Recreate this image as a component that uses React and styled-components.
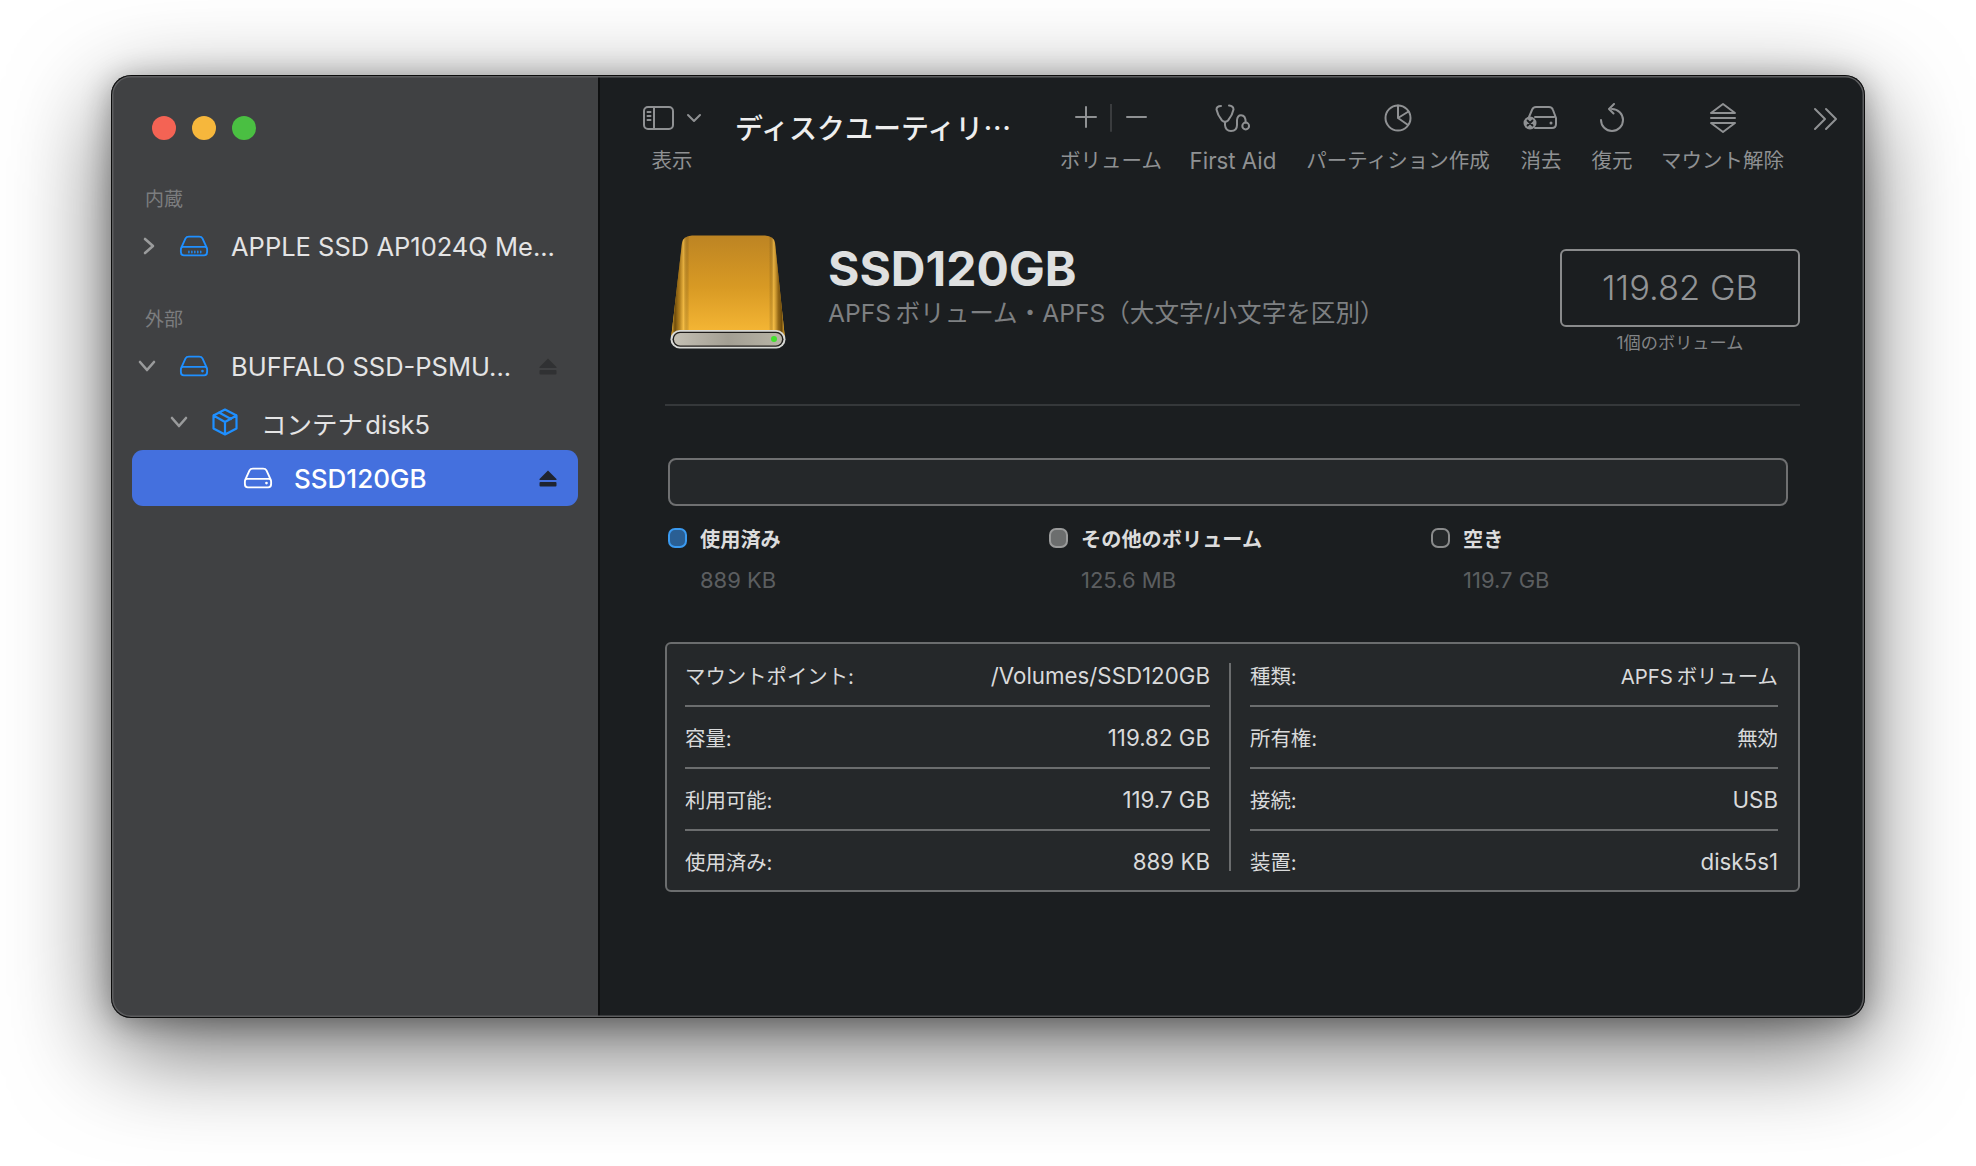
import styled, { createGlobalStyle } from "styled-components";

const GlobalStyle = createGlobalStyle`
  html, body {
    margin: 0;
    background: #fff;
  }
  body {
    font-family: Inter, "Noto Sans CJK JP", "Noto Sans", sans-serif;
    overflow: hidden;
  }
`;

const Page = styled.div`
  width: 1976px;
  height: 1166px;
  box-sizing: border-box;
  padding: 75px 0 0 111px;
  overflow: hidden;
`;

const Win = styled.div`
  display: flex;
  width: 1754px;
  height: 943px;
  border-radius: 20px;
  overflow: hidden;
  background: #1b1e20;
  box-shadow: 0 30px 100px rgba(0, 0, 0, 0.6), 0 4px 30px rgba(0, 0, 0, 0.32);
  position: relative;
  &::after {
    content: "";
    position: absolute;
    inset: 0;
    border-radius: 20px;
    box-shadow: inset 0 0 0 1px #0c0c0c, inset 0 0 0 2.5px #5c5d5f;
    pointer-events: none;
  }
`;

/* sidebar */
const Sidebar = styled.aside`
  width: 489px;
  flex: none;
  box-sizing: border-box;
  background: #404143;
  border-right: 2px solid #0e0f10;
  padding: 41px 20px 0 21px;
`;

const Lights = styled.div`
  display: flex;
  gap: 16px;
  padding-left: 20px;
  margin-bottom: 48px;
`;

const Light = styled.span`
  width: 24px;
  height: 24px;
  border-radius: 50%;
  background: ${(p) => p.$color};
`;

const SectionLabel = styled.div`
  font-size: 19px;
  line-height: 24px;
  color: #7c7d7f;
  padding-left: 13px;
  margin: ${(p) => p.$margin || "0"};
`;

const Row = styled.div`
  display: flex;
  align-items: center;
  height: 56px;
  margin: ${(p) => p.$margin || "0"};
  border-radius: 11px;
  background: ${(p) => (p.$selected ? "#4470de" : "transparent")};
  color: ${(p) => (p.$selected ? "#fff" : "#e4e4e5")};
  font-size: ${(p) => (p.$selected ? 26 : 25.5)}px;
  font-weight: ${(p) => (p.$selected ? 500 : 400)};
  white-space: nowrap;
`;

const ChevronSlot = styled.span`
  display: flex;
  justify-content: center;
  flex: none;
  width: 24px;
  margin-left: ${(p) => p.$left}px;
  margin-right: ${(p) => p.$right}px;
`;

const RowIcon = styled.svg`
  display: block;
  flex: none;
  width: ${(p) => p.$w}px;
  height: ${(p) => p.$h}px;
  margin-right: ${(p) => p.$gap}px;
  fill: none;
  stroke: ${(p) => p.$color};
  stroke-width: 2.2;
  stroke-linecap: round;
  stroke-linejoin: round;
`;

const RowLabel = styled.span`
  flex: 1;
`;

const Eject = styled.svg`
  display: block;
  flex: none;
  width: 18px;
  height: 17px;
  margin-right: 21px;
  fill: ${(p) => p.$color};
`;

/* main area */
const Main = styled.main`
  flex: 1;
  min-width: 0;
`;

const Toolbar = styled.header`
  display: flex;
  align-items: flex-start;
  height: 128px;
  padding-top: 27px;
  box-sizing: border-box;
`;

const ToolItem = styled.div`
  display: flex;
  flex-direction: column;
  align-items: center;
  flex: none;
  width: ${(p) => p.$w}px;
  margin-left: ${(p) => p.$left}px;
  color: #8f9193;
`;

const ToolIcon = styled.div`
  display: flex;
  align-items: center;
  justify-content: center;
  height: 32px;
  margin-bottom: 13.5px;
  svg {
    display: block;
    fill: none;
    stroke: #8f9193;
    stroke-width: 2;
    stroke-linecap: round;
    stroke-linejoin: round;
  }
`;

const ToolLabel = styled.span`
  font-size: ${(p) => p.$size || 20.5}px;
  line-height: 26px;
  white-space: nowrap;
`;

const AppTitle = styled.h1`
  flex: none;
  width: 275px;
  margin: 7px 0 0 32px;
  font-family: "Noto Sans CJK JP", sans-serif;
  font-size: 28px;
  font-weight: 500;
  line-height: 36px;
  color: #eeeeee;
  white-space: nowrap;
`;

const Overflow = styled.svg`
  display: block;
  flex: none;
  width: 26px;
  height: 24px;
  margin: 5px 0 0 30px;
  fill: none;
  stroke: #8f9193;
  stroke-width: 2;
  stroke-linecap: round;
  stroke-linejoin: round;
`;

const Content = styled.div`
  padding: 0 65px 0 65px;
`;

const Header = styled.section`
  display: flex;
  align-items: flex-start;
  border-bottom: 2px solid #35383a;
  box-sizing: border-box;
  height: 203px;
`;

const DiskArt = styled.svg`
  display: block;
  flex: none;
  width: 116px;
  height: 114px;
  margin: 32px 42px 0 5px;
`;

const HeaderText = styled.div`
  flex: 1;
  padding-top: 38px;
`;

const DiskName = styled.div`
  font-size: 48px;
  font-weight: 700;
  line-height: 56px;
  color: #dfe0e0;
`;

const DiskMeta = styled.div`
  font-size: 24.6px;
  line-height: 34px;
  margin-top: -1px;
  color: #7e8082;
  white-space: nowrap;
`;

const SizeCol = styled.div`
  width: 240px;
  padding-top: 46px;
  text-align: center;
`;

const SizeBox = styled.div`
  box-sizing: border-box;
  height: 78px;
  border: 2px solid #8a8b8c;
  border-radius: 6px;
  line-height: 74px;
  font-size: 34.5px;
  font-weight: 300;
  color: #929496;
`;

const SizeNote = styled.div`
  margin-top: 4px;
  font-size: 17.2px;
  line-height: 24px;
  color: #838587;
`;

const UsageBar = styled.div`
  box-sizing: border-box;
  height: 48px;
  margin: 52px 12px 0 3px;
  border: 2px solid #6f7071;
  border-radius: 8px;
  background: #25282a;
`;

const Legend = styled.div`
  display: grid;
  grid-template-columns: 381px 382px 1fr;
  margin: 21px 0 0 3px;
  height: 115px;
`;

const LegendItem = styled.div`
  display: grid;
  grid-template-columns: 19px 1fr;
  column-gap: 13px;
  grid-auto-rows: min-content;
`;

const Swatch = styled.span`
  box-sizing: border-box;
  width: 19px;
  height: 20px;
  border-radius: 7px;
  border: 2px solid ${(p) => p.$border};
  background: ${(p) => p.$fill};
  margin-top: 1px;
`;

const LegendName = styled.span`
  font-size: 20.2px;
  font-weight: 700;
  line-height: 26px;
  color: #dcdcdc;
  white-space: nowrap;
`;

const LegendValue = styled.span`
  grid-column: 2;
  margin-top: 14px;
  font-size: 22px;
  line-height: 26px;
  color: #5c5e60;
`;

const InfoCard = styled.section`
  box-sizing: border-box;
  display: grid;
  grid-template-columns: 564px 1fr;
  height: 250px;
  padding: 19px 0 0;
  border: 2px solid #6b6d6e;
  border-radius: 6px;
  background: #25282a;
`;

const InfoCol = styled.div`
  height: 208px;
  padding: ${(p) => p.$padding};
  border-right: ${(p) => (p.$divider ? "2px solid #6b6d6e" : "none")};
  box-sizing: border-box;
`;

const InfoRows = styled.div`
  margin-top: -18px;
`;

const InfoRow = styled.div`
  display: flex;
  align-items: center;
  justify-content: space-between;
  height: 60px;
  margin-bottom: 2px;
  position: relative;
  color: #d9dadb;
  white-space: nowrap;
  &:not(:last-child)::after {
    content: "";
    position: absolute;
    left: 0;
    right: 0;
    bottom: -2px;
    height: 2px;
    background: #6b6d6e;
  }
`;

const InfoKey = styled.span`
  font-size: 20.4px;
`;

const InfoValue = styled.span`
  font-size: ${(p) => (p.$latin ? 22.3 : 20.4)}px;
`;

const hddPath = "M2 15 L7 4 Q8 2 11 2 H23 Q26 2 27 4 L32 15 M4 14 H30 Q32.5 14 32.5 17 V20 Q32.5 24 29 24 H5 Q1.5 24 1.5 20 V17 Q1.5 14 4 14 Z";

const ChevronRight = () => (
  <svg width="12" height="18" viewBox="0 0 12 18" fill="none" stroke="#9a9b9c" strokeWidth="2.6" strokeLinecap="round" strokeLinejoin="round">
    <path d="M2 2 L10 9 L2 16" />
  </svg>
);

const ChevronDown = () => (
  <svg width="18" height="12" viewBox="0 0 18 12" fill="none" stroke="#9a9b9c" strokeWidth="2.6" strokeLinecap="round" strokeLinejoin="round">
    <path d="M2 2 L9 10 L16 2" />
  </svg>
);

const EjectIcon = ({ color }) => (
  <Eject $color={color} viewBox="0 0 18 17">
    <path d="M9 0.5 L17.5 9 Q18 10 17 10 H1 Q0 10 0.5 9 Z" />
    <rect x="0.5" y="12" width="17" height="4.5" rx="1" />
  </Eject>
);

const Volume = ({ color, gap }) => (
  <RowIcon $color={color} $w={30} $h={22} $gap={gap} viewBox="0 0 34 26">
    <path d={hddPath} />
    <circle cx="27" cy="19" r="1.6" fill={color} stroke="none" />
  </RowIcon>
);

const infoLeft = [
  ["マウントポイント:", "/Volumes/SSD120GB", true],
  ["容量:", "119.82 GB", true],
  ["利用可能:", "119.7 GB", true],
  ["使用済み:", "889 KB", true],
];

const infoRight = [
  ["種類:", "APFS\u2009ボリューム", false],
  ["所有権:", "無効", false],
  ["接続:", "USB", true],
  ["装置:", "disk5s1", true],
];

const legend = [
  { name: "使用済み", value: "889 KB", fill: "#2a5f94", border: "#3a9af0" },
  { name: "その他のボリューム", value: "125.6 MB", fill: "#6c6e6e", border: "#9a9b9b" },
  { name: "空き", value: "119.7 GB", fill: "#25282a", border: "#8a8b8c" },
];

export default function App() {
  return (
    <>
      <GlobalStyle />
      <Page>
        <Win>
          <Sidebar>
            <Lights>
              <Light $color="#f46354" />
              <Light $color="#f6b73c" />
              <Light $color="#4abf42" />
            </Lights>
            <SectionLabel>内蔵</SectionLabel>
            <Row $margin="6px 0 0">
              <ChevronSlot $left={5} $right={18}><ChevronRight /></ChevronSlot>
              <RowIcon $color="#1f8fff" $w={30} $h={22} $gap={22} viewBox="0 0 34 26">
                <path d={hddPath} />
                <path d="M11 19 V21 M14.5 19 V21 M18 19 V21 M21.5 19 V21 M25 19 V21" strokeWidth="1.6" />
              </RowIcon>
              <RowLabel>APPLE SSD AP1024Q Me...</RowLabel>
            </Row>
            <SectionLabel $margin="34px 0 0">外部</SectionLabel>
            <Row $margin="6px 0 0">
              <ChevronSlot $left={3} $right={20}><ChevronDown /></ChevronSlot>
              <Volume color="#1f8fff" gap={22} />
              <RowLabel>BUFFALO SSD-PSMU...</RowLabel>
              <EjectIcon color="#303133" />
            </Row>
            <Row>
              <ChevronSlot $left={35} $right={21}><ChevronDown /></ChevronSlot>
              <RowIcon $color="#1f8fff" $w={26} $h={28} $gap={23} viewBox="0 0 26 28">
                <path d="M13 1.5 L24.5 7.5 V20.5 L13 26.5 L1.5 20.5 V7.5 Z M1.5 7.5 L13 14 L24.5 7.5 M13 14 V26.5 M7 4.5 L19 11" />
              </RowIcon>
              <RowLabel>コンテナ{"\u200a"}disk5</RowLabel>
            </Row>
            <Row $selected>
              <ChevronSlot $left={74} $right={13} />
              <Volume color="#ffffff" gap={21} />
              <RowLabel>SSD120GB</RowLabel>
              <EjectIcon color="#1f2430" />
            </Row>
          </Sidebar>

          <Main>
            <Toolbar>
              <ToolItem $w={62} $left={41}>
                <ToolIcon>
                  <svg width="62" height="24" viewBox="0 0 62 24">
                    <rect x="3" y="1" width="29" height="22" rx="4" />
                    <path d="M13 1 V23 M6.5 6 H9.5 M6.5 10 H9.5 M6.5 14 H9.5" />
                    <path d="M47 9 L53 15 L59 9" />
                  </svg>
                </ToolIcon>
                <ToolLabel>表示</ToolLabel>
              </ToolItem>
              <AppTitle>ディスクユーティリ…</AppTitle>
              <ToolItem $w={100} $left={51}>
                <ToolIcon>
                  <svg width="74" height="28" viewBox="0 0 74 28">
                    <path d="M2 13 H22 M12 3 V23 M53 13 H72" />
                    <path d="M37 0 V27" stroke="#3a3c3e" />
                  </svg>
                </ToolIcon>
                <ToolLabel>ボリューム</ToolLabel>
              </ToolItem>
              <ToolItem $w={86} $left={29}>
                <ToolIcon>
                  <svg width="36" height="30" viewBox="0 0 36 30">
                    <path d="M6 3 Q1.5 3 1.5 6.5 Q2.5 12 7 17.5 Q10 20 13 17.5 Q17.5 12 18.5 6.5 Q18.5 3 14 2.6" />
                    <path d="M10 19 V22 Q10.5 28 16 28 Q22 28 22 22 V17 Q22.5 12.3 26 12.3 Q30.7 12.3 30.7 19.5" />
                    <circle cx="30.7" cy="23" r="3.4" />
                  </svg>
                </ToolIcon>
                <ToolLabel $size={22.3}>First Aid</ToolLabel>
              </ToolItem>
              <ToolItem $w={182} $left={31}>
                <ToolIcon>
                  <svg width="28" height="28" viewBox="0 0 28 28">
                    <circle cx="14" cy="14" r="12.5" />
                    <path d="M14 1.5 V14 L24 21 M14 14 L24.5 7.5" />
                  </svg>
                </ToolIcon>
                <ToolLabel>パーティション作成</ToolLabel>
              </ToolItem>
              <ToolItem $w={40} $left={32}>
                <ToolIcon>
                  <svg width="36" height="26" viewBox="0 0 36 26">
                    <path d="M6 12 L9 5 Q10 2 13 2 H26 Q29 2 30 5 L33 13 V19 Q33 23 29 23 H12 M12 12 H31" />
                    <circle cx="28" cy="18" r="1.5" fill="#8f9193" stroke="none" />
                    <circle cx="7" cy="18" r="6.5" fill="#8f9193" stroke="none" />
                    <path d="M4.5 15.5 L9.5 20.5 M9.5 15.5 L4.5 20.5" stroke="#1b1e20" strokeWidth="1.8" />
                  </svg>
                </ToolIcon>
                <ToolLabel>消去</ToolLabel>
              </ToolItem>
              <ToolItem $w={40} $left={31}>
                <ToolIcon>
                  <svg width="26" height="30" viewBox="0 0 26 30">
                    <path d="M13 6 A11 11 0 1 1 2 17 M15 1 L10 6 L14.5 10.5" />
                  </svg>
                </ToolIcon>
                <ToolLabel>復元</ToolLabel>
              </ToolItem>
              <ToolItem $w={121} $left={30}>
                <ToolIcon>
                  <svg width="28" height="32" viewBox="0 0 28 32">
                    <path d="M14 2 L26 11 H2 Z M2 16 H26 M2 21 H26 L14 30 Z" />
                  </svg>
                </ToolIcon>
                <ToolLabel>マウント解除</ToolLabel>
              </ToolItem>
              <Overflow viewBox="0 0 26 24">
                <path d="M2 2 L12 12 L2 22 M13 2 L23 12 L13 22" />
              </Overflow>
            </Toolbar>

            <Content>
              <Header>
                <DiskArt viewBox="0 0 116 114">
                  <defs>
                    <linearGradient id="shell" x1="0" y1="0" x2="0" y2="1">
                      <stop offset="0" stopColor="#bd8423" />
                      <stop offset="0.5" stopColor="#d89a24" />
                      <stop offset="1" stopColor="#f9ba37" />
                    </linearGradient>
                    <linearGradient id="edge" x1="0" y1="0" x2="1" y2="0">
                      <stop offset="0" stopColor="#e8ad32" />
                      <stop offset="0.035" stopColor="#6e4c0c" />
                      <stop offset="0.075" stopColor="#8c6212" stopOpacity="0.6" />
                      <stop offset="0.11" stopColor="#f8c654" stopOpacity="0.55" />
                      <stop offset="0.16" stopColor="#000" stopOpacity="0" />
                      <stop offset="0.86" stopColor="#000" stopOpacity="0" />
                      <stop offset="0.9" stopColor="#f8c654" stopOpacity="0.55" />
                      <stop offset="0.94" stopColor="#7a5410" stopOpacity="0.75" />
                      <stop offset="0.97" stopColor="#6e4c0c" />
                      <stop offset="1" stopColor="#e8ad32" />
                    </linearGradient>
                    <linearGradient id="face" x1="0" y1="0" x2="1" y2="0">
                      <stop offset="0" stopColor="#c4c0b4" />
                      <stop offset="0.5" stopColor="#a39f93" />
                      <stop offset="1" stopColor="#b8b4a6" />
                    </linearGradient>
                  </defs>
                  <path d="M12 8 Q13 1 22 0.5 H95 Q104 1 105 8 L115 104 H1 Z" fill="url(#shell)" />
                  <path d="M12 8 Q13 1 22 0.5 H95 Q104 1 105 8 L115 104 H1 Z" fill="url(#edge)" />
                  <rect x="0.5" y="95" width="115" height="18.5" rx="9.2" fill="#d8d9d6" />
                  <rect x="2.5" y="96.8" width="111" height="15" rx="7.5" fill="#1f1d1a" />
                  <rect x="4" y="98" width="108" height="12.5" rx="6.2" fill="url(#face)" />
                  <circle cx="104" cy="104" r="3" fill="#43e02e" />
                </DiskArt>
                <HeaderText>
                  <DiskName>SSD120GB</DiskName>
                  <DiskMeta>APFS{"\u2009"}ボリューム・APFS（大文字/小文字を区別）</DiskMeta>
                </HeaderText>
                <SizeCol>
                  <SizeBox>119.82 GB</SizeBox>
                  <SizeNote>1個のボリューム</SizeNote>
                </SizeCol>
              </Header>

              <UsageBar />
              <Legend>
                {legend.map((l) => (
                  <LegendItem key={l.name}>
                    <Swatch $fill={l.fill} $border={l.border} />
                    <LegendName>{l.name}</LegendName>
                    <LegendValue>{l.value}</LegendValue>
                  </LegendItem>
                ))}
              </Legend>

              <InfoCard>
                <InfoCol $divider $padding="0 19px 0 18px">
                  <InfoRows>
                    {infoLeft.map(([k, v, latin]) => (
                      <InfoRow key={k}><InfoKey>{k}</InfoKey><InfoValue $latin={latin}>{v}</InfoValue></InfoRow>
                    ))}
                  </InfoRows>
                </InfoCol>
                <InfoCol $padding="0 20px 0 19px">
                  <InfoRows>
                    {infoRight.map(([k, v, latin]) => (
                      <InfoRow key={k}><InfoKey>{k}</InfoKey><InfoValue $latin={latin}>{v}</InfoValue></InfoRow>
                    ))}
                  </InfoRows>
                </InfoCol>
              </InfoCard>
            </Content>
          </Main>
        </Win>
      </Page>
    </>
  );
}
